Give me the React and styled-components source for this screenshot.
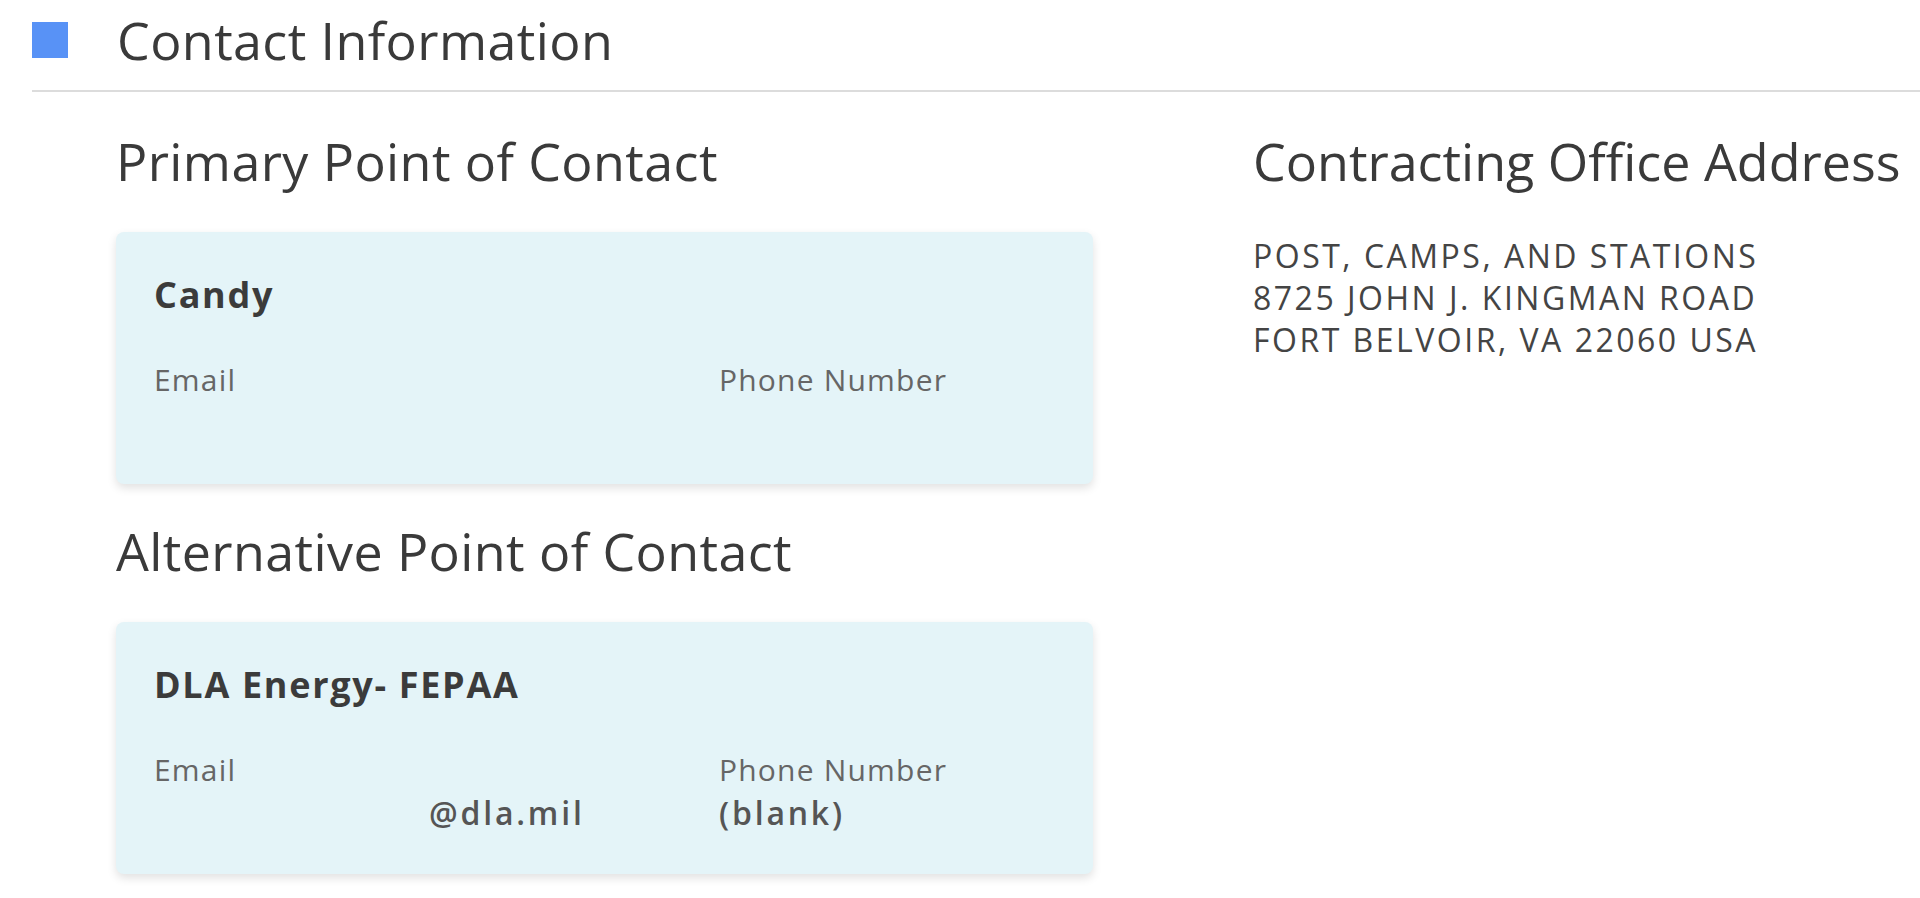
import React from "react";
import styled, { createGlobalStyle } from "styled-components";

const GlobalStyle = createGlobalStyle`
  body {
    margin: 0;
    background: #ffffff;
    font-family: "Open Sans", Lato, sans-serif;
    color: #3a3a3a;
  }
`;

const Page = styled.div`
  width: 1920px;
  height: 898px;
  overflow: hidden;
`;

const SectionHeader = styled.div`
  display: flex;
  align-items: center;
  gap: 49px;
  padding: 10px 0 0 32px;
  height: 60px;
  margin-bottom: 20px;
`;

const Marker = styled.span`
  width: 36px;
  height: 36px;
  background: #5892f6;
  flex-shrink: 0;
`;

const Title = styled.h1`
  margin: 0;
  font-size: 52px;
  line-height: 60px;
  font-weight: 400;
  letter-spacing: 0.4px;
  color: #3a3a3a;
`;

const Divider = styled.hr`
  margin: 0 0 0 32px;
  border: 0;
  height: 2px;
  background: #dcdcdc;
`;

const Body = styled.div`
  display: grid;
  grid-template-columns: 977px 1fr;
  column-gap: 160px;
  padding: 39px 0 0 116px;
`;

const Column = styled.div`
  display: flex;
  flex-direction: column;
`;

const Heading = styled.h2`
  margin: 0 0 ${(p) => p.$after || 41}px;
  font-size: 52px;
  line-height: 60px;
  font-weight: 400;
  letter-spacing: ${(p) => p.$tracking ?? 0.4}px;
  color: #3a3a3a;
  white-space: nowrap;
`;

const Card = styled.div`
  background: #e4f4f8;
  border-radius: 8px;
  box-shadow: 0 4px 10px rgba(0, 0, 0, 0.12);
  padding: 43px 38px 43px;
  margin-bottom: 37px;
`;

const Name = styled.div`
  font-size: 36px;
  line-height: 40px;
  font-weight: 700;
  letter-spacing: 1.7px;
  color: #3b3b3b;
  margin-bottom: 47px;
`;

const Fields = styled.div`
  display: grid;
  grid-template-columns: 565px 1fr;
`;

const Label = styled.div`
  font-size: 30px;
  line-height: 36px;
  letter-spacing: 1.2px;
  color: #666666;
  margin-bottom: 7px;
`;

const Value = styled.div`
  font-size: 32px;
  line-height: 36px;
  min-height: 36px;
  font-weight: 600;
  letter-spacing: 2.8px;
  color: #555555;
  padding-left: ${(p) => p.$indent || 0}px;
`;

const Address = styled.div`
  font-size: 32px;
  line-height: 42px;
  letter-spacing: 2.5px;
  color: #444444;
`;

const Contact = ({ name, email, emailIndent, phone }) => (
  <Card>
    <Name>{name}</Name>
    <Fields>
      <div>
        <Label>Email</Label>
        <Value $indent={emailIndent}>{email}</Value>
      </div>
      <div>
        <Label>Phone Number</Label>
        <Value>{phone}</Value>
      </div>
    </Fields>
  </Card>
);

const App = () => {
  return (
    <Page>
      <GlobalStyle />
      <SectionHeader>
        <Marker />
        <Title>Contact Information</Title>
      </SectionHeader>
      <Divider />
      <Body>
        <Column>
          <Heading>Primary Point of Contact</Heading>
          <Contact name="Candy" />
          <Heading>Alternative Point of Contact</Heading>
          <Contact
            name="DLA Energy- FEPAA"
            email="@dla.mil"
            emailIndent={275}
            phone="(blank)"
          />
        </Column>
        <Column>
          <Heading $after={44} $tracking={0}>
            Contracting Office Address
          </Heading>
          <Address>
            POST, CAMPS, AND STATIONS
            <br />
            8725 JOHN J. KINGMAN ROAD
            <br />
            FORT BELVOIR, VA 22060 USA
          </Address>
        </Column>
      </Body>
    </Page>
  );
};

export default App;
